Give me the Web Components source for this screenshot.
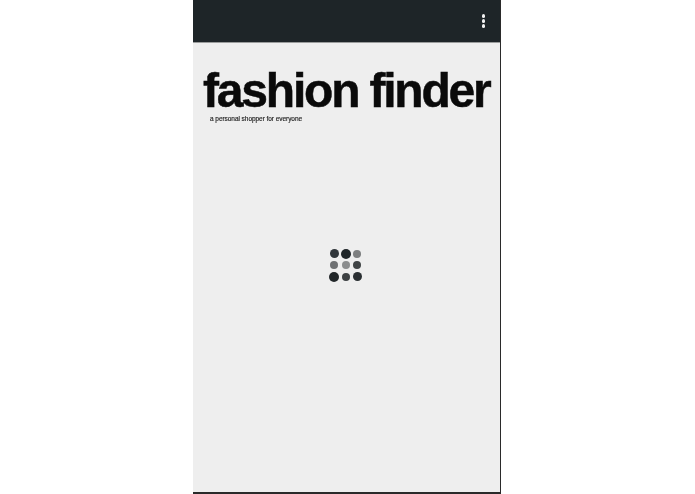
<!DOCTYPE html>
<html>
<head>
<meta charset="utf-8">
<title>fashion finder</title>
<style>
  html, body { margin: 0; padding: 0; height: 100%; background: #fff; }
  body { display: flex; justify-content: center; font-family: "Liberation Sans", Arial, sans-serif; }
</style>
</head>
<body>
<phone-screen>
  <app-bar></app-bar>
  <app-title tagline="a personal shopper for everyone">fashion finder</app-title>
  <dot-loader></dot-loader>
</phone-screen>

<script>
class PhoneScreen extends HTMLElement {
  constructor() {
    super();
    this.attachShadow({ mode: 'open' }).innerHTML = `
      <style>
        :host {
          display: flex;
          flex-direction: column;
          box-sizing: border-box;
          width: 308px;
          height: 494px;
          margin-left: -1px;
          background: #eeeeee;
          border-right: 1px solid #2a2a2a;
          border-bottom: 2px solid #2a2a2a;
        }
      </style>
      <slot></slot>`;
  }
}

class AppBar extends HTMLElement {
  constructor() {
    super();
    this.attachShadow({ mode: 'open' }).innerHTML = `
      <style>
        :host {
          display: flex;
          flex: none;
          align-items: center;
          justify-content: flex-end;
          box-sizing: border-box;
          height: 43px;
          padding-right: 15px;
          background: #1e2528;
          border-bottom: 1px solid #9a9c9c;
        }
        .menu { display: flex; flex-direction: column; gap: 1.5px; }
        .menu span { width: 3.5px; height: 3.5px; border-radius: 50%; background: #f2f2f2; }
      </style>
      <div class="menu"><span></span><span></span><span></span></div>`;
  }
}

class AppTitle extends HTMLElement {
  constructor() {
    super();
    this.attachShadow({ mode: 'open' });
  }

  connectedCallback() {
    this.tagline = this.getAttribute('tagline') || '';
    this.shadowRoot.innerHTML = `
      <style>
        :host { display: block; flex: none; padding: 24px 0 0 10px; color: #0a0a0a; }
        h1 {
          margin: 0;
          font-size: 48px;
          line-height: 47px;
          font-weight: 700;
          letter-spacing: -2.2px;
          white-space: nowrap;
          -webkit-text-stroke: 0.5px #0a0a0a;
          filter: blur(0.35px);
        }
        p {
          margin: 0;
          padding-left: 7px;
          font-size: 6.5px;
          line-height: 9px;
          color: #222;
          letter-spacing: -0.05px;
          -webkit-text-stroke: 0.15px #222;
          filter: blur(0.25px);
        }
      </style>
      <h1><slot></slot></h1>
      <p>${this.tagline}</p>`;
  }
}

class DotLoader extends HTMLElement {
  constructor() {
    super();
    const sizes = [
      [9, 10, 8, '#30363a', '#1f2528', '#7d7f80'],
      [8, 8, 8, '#6e7072', '#8b8d8e', '#3f4345'],
      [10, 8, 9, '#212629', '#3d4143', '#2a2f32']
    ];
    const dots = sizes.map(r => r.slice(0, 3).map((s, i) =>
      `<i style="width:${s}px;height:${s}px;background:${r[i + 3]}"></i>`).join('')).join('');
    this.attachShadow({ mode: 'open' }).innerHTML = `
      <style>
        :host {
          display: grid;
          grid-template-columns: repeat(3, 11.5px);
          grid-auto-rows: 11.5px;
          place-items: center;
          align-self: center;
          margin: 125px 2px 0 0;
        }
        i { display: block; border-radius: 50%; }
      </style>
      ${dots}`;
  }
}

customElements.define('phone-screen', PhoneScreen);
customElements.define('app-bar', AppBar);
customElements.define('app-title', AppTitle);
customElements.define('dot-loader', DotLoader);
</script>
</body>
</html>
